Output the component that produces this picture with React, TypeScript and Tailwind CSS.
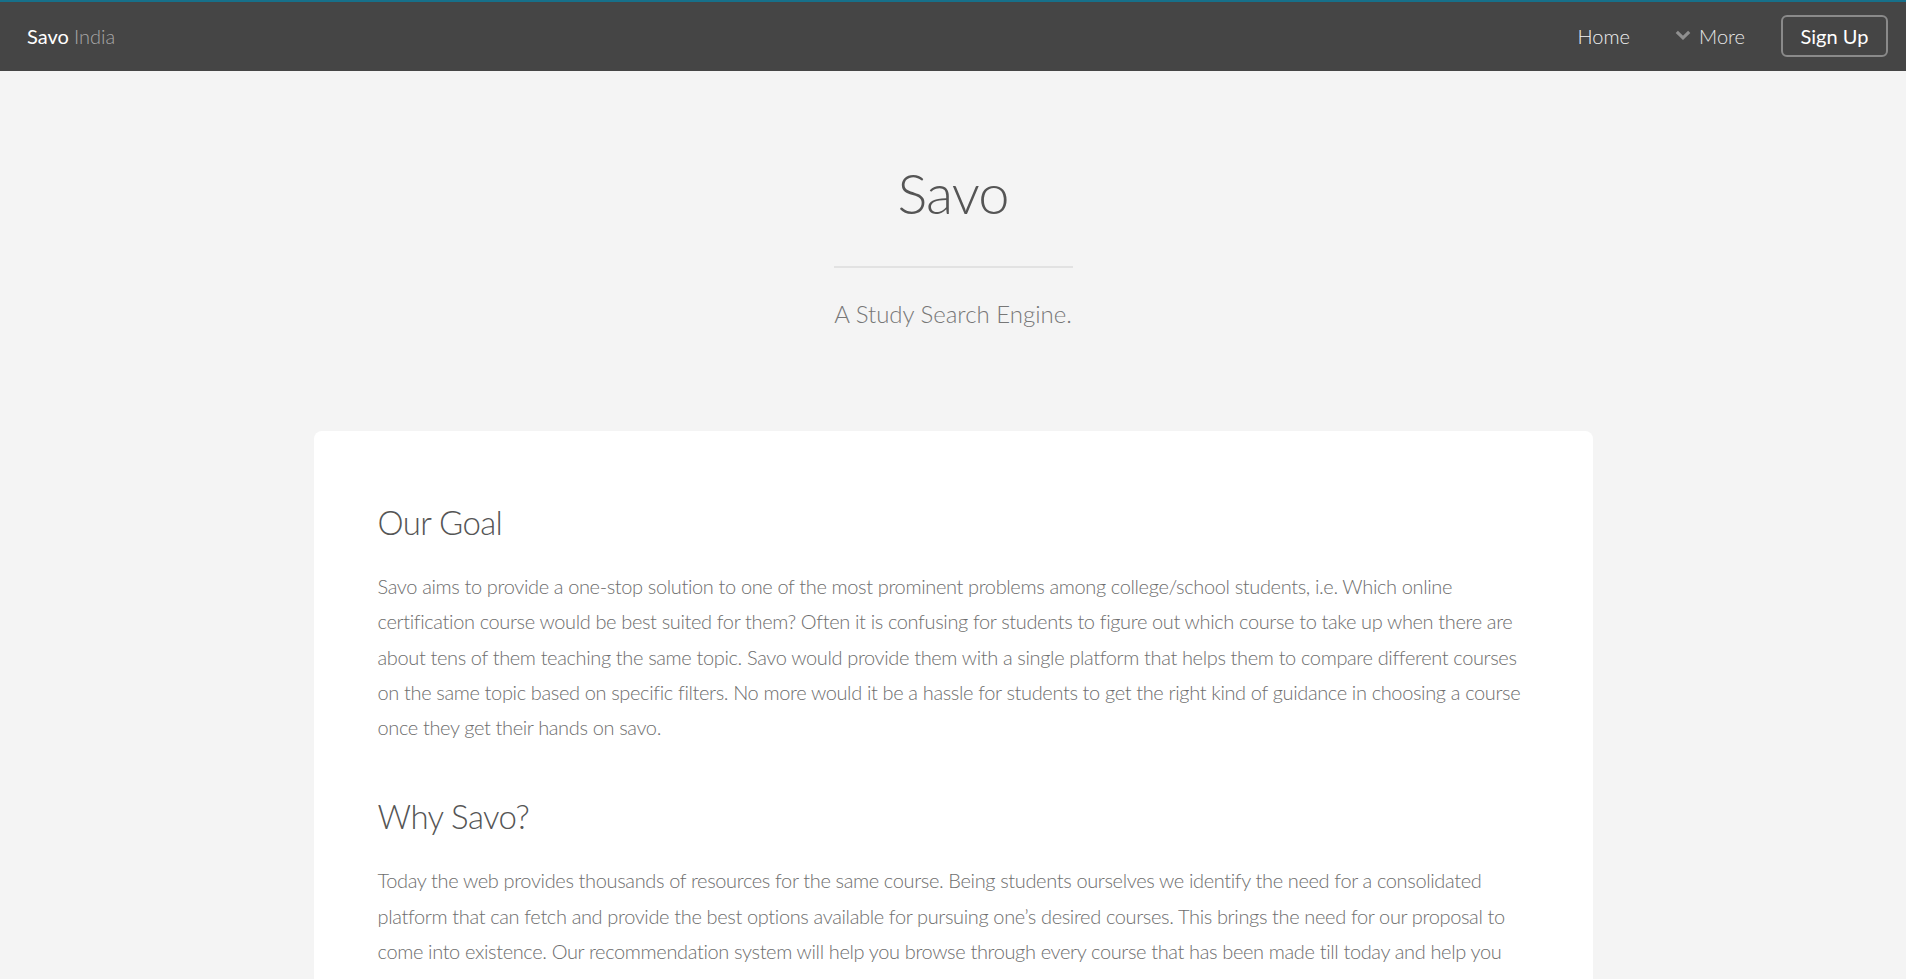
import React from "react";

const p1 = [
  "Savo aims to provide a one-stop solution to one of the most prominent problems among college/school students, i.e. Which online",
  "certification course would be best suited for them? Often it is confusing for students to figure out which course to take up when there are",
  "about tens of them teaching the same topic. Savo would provide them with a single platform that helps them to compare different courses",
  "on the same topic based on specific filters. No more would it be a hassle for students to get the right kind of guidance in choosing a course",
  "once they get their hands on savo.",
];

const p2 = [
  "Today the web provides thousands of resources for the same course. Being students ourselves we identify the need for a consolidated",
  "platform that can fetch and provide the best options available for pursuing one\u2019s desired courses. This brings the need for our proposal to",
  "come into existence. Our recommendation system will help you browse through every course that has been made till today and help you",
  "find the one that suits you the best. It compares courses on the basis of their content, ratings, price and duration so that you can decide.",
];

function Para({ lines }: { lines: string[] }) {
  return (
    <p className="text-[20px] leading-[35.25px] font-light text-[#6e6e6e] whitespace-nowrap tracking-[-0.36px]">
      {lines.map((l, i) => (
        <React.Fragment key={i}>
          {l}
          {i < lines.length - 1 && <br />}
        </React.Fragment>
      ))}
    </p>
  );
}

export default function App() {
  return (
    <div
      className="min-h-screen bg-[#f4f4f4]"
      style={{ fontFamily: "Lato, 'Open Sans', sans-serif" }}
    >
      <header className="h-[71px] bg-[#454545] border-t-2 border-[#16708a] flex items-center justify-between pl-[27px] pr-[18px]">
        <div className="text-[20px] leading-none mt-[-2px]">
          <span className="text-white font-normal">Savo</span>{" "}
          <span className="text-[#a8a8a8] font-light">India</span>
        </div>
        <nav className="flex items-center">
          <a className="text-[20px] font-light text-[#f0f0f0] mt-[-2px]">Home</a>
          <div className="flex items-center ml-[45px] mt-[-2px]">
            <svg width="16" height="10" viewBox="0 0 16 10" className="mr-[8px] mt-[-2px]">
              <path d="M1.8 1.8 L8 7.8 L14.2 1.8" stroke="#8f8f8f" strokeWidth="3.2" fill="none" />
            </svg>
            <a className="text-[20px] font-light text-[#e8e8e8]">More</a>
          </div>
          <button className="ml-[36px] h-[42px] w-[107px] border-2 border-[#8a8a8a] rounded-[6px] text-white text-[20px] font-normal mt-[-1px]">
            Sign Up
          </button>
        </nav>
      </header>

      <section className="flex flex-col items-center">
        <h1 className="mt-[86px] text-[56px] leading-[72px] font-light text-[#555] tracking-[-1px]">Savo</h1>
        <div className="mt-[37px] w-[239px] h-[2px] bg-[#e2e2e2]" />
        <p className="mt-[31px] text-[24px] leading-[30px] font-light text-[#777]">
          A Study Search Engine.
        </p>
      </section>

      <main className="mx-auto mt-[102px] w-[1279px] bg-white rounded-[8px] px-[64px] pt-[70px] pb-[60px]">
        <h2 className="text-[33px] leading-[42px] font-light text-[#555] mb-[26px] tracking-[-0.6px]">Our Goal</h2>
        <Para lines={p1} />
        <h2 className="mt-[50px] text-[33px] leading-[42px] font-light text-[#555] mb-[26px] tracking-[-0.6px]">Why Savo?</h2>
        <Para lines={p2} />
      </main>
    </div>
  );
}
